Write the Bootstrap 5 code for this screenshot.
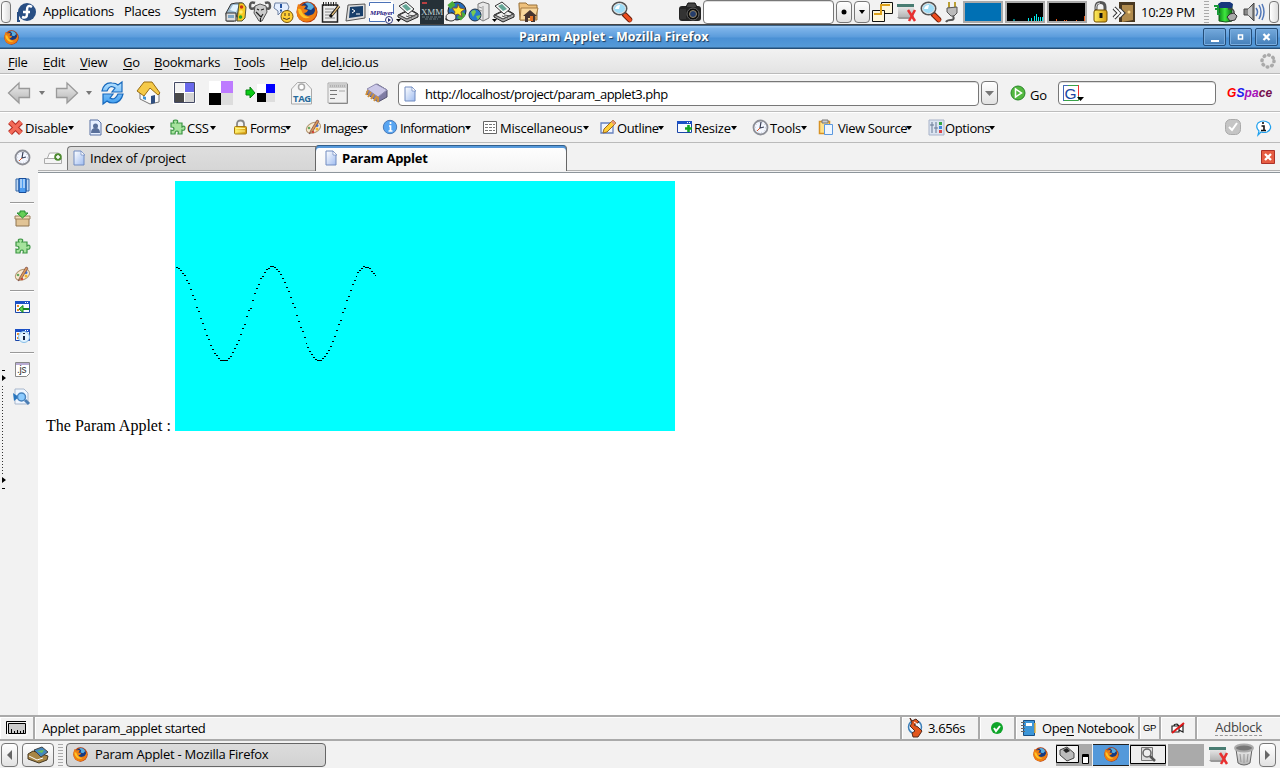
<!DOCTYPE html>
<html lang="en">
<head>
<meta charset="utf-8">
<title>Param Applet - Mozilla Firefox</title>
<link href="https://cdn.jsdelivr.net/npm/bootstrap@5.3.0/dist/css/bootstrap.min.css" rel="stylesheet">
<style>
body{width:1280px;height:768px;overflow:hidden;background:#f2f2f2;color:#000;font:13px/16px "Open Sans","Noto Sans",sans-serif;letter-spacing:-.25px;white-space:nowrap}
svg{display:block;flex:none;overflow:visible}
u{text-underline-offset:2px}
.bar{display:grid;align-items:center;flex:none}
.desk{height:25px;padding-bottom:1px;border-bottom:1px solid #444;grid-template-columns:17px 26px 81px 50px 51px 24px 24px 23px 24px 25px 23px 28px 24px 25px 23px 24px 24px 95px 67px 25px 133px 18px 17px 25px 24px 24px 19px 42px 42px 45px 20px 29px 63px 9px 30px 25px 12px}
.word{margin-top:-2px}
.grab{width:10px;height:22px;margin-left:1px;border:1px solid #777;border-radius:4px;background:linear-gradient(90deg,#fff,#ddd)}
.field{background:#fff;border:1px solid #777;border-radius:4px;box-shadow:inset 0 1px #ddd}
.search-input{width:131px;height:24px}
.address{width:581px;height:25px;letter-spacing:-.49px;padding-top:1px}
.searchbox{width:158px;height:24px}
.pbtn{width:17px;height:24px;border:1px solid #777;border-radius:4px;background:linear-gradient(#fff,#e2e2e2);display:flex;align-items:center;justify-content:center}
.pbtn.mini{width:16px;height:22px}
.pbtn.wide{width:32px}
.graph{width:40px;height:22px;border:2px solid #aaa;background:#000}
.graph.cpu{background:#0070b4}
.grip{width:5px;height:22px;background:repeating-linear-gradient(#aaa 0 1px,transparent 1px 3px)}
.titlebar{height:24px;background:linear-gradient(#3d6285 0 1px,#9cc7f0 1px 2px,#7fb5ea 3px,#5b9cdc 12px,#4a90d4 13px,#559ad8 22px,#254f78 23px);grid-template-columns:519px 686px 26px 26px 23px}
.caption{color:#fff;font-weight:700;font-size:12.5px;letter-spacing:.08px;text-shadow:1px 1px 1px #1b3857}
.wbtn{width:23px;height:18px;border:1px solid #244d78;border-radius:2px;background:linear-gradient(#74a9dc,#447fb9);box-shadow:inset 0 0 0 1px #78acdf;margin:0 0 0 -2px}
.menus{height:25px;padding-top:2px;background:linear-gradient(#f2f2f2,#e3e3e3);border-bottom:1px solid #bbb;padding-left:8px;grid-template-columns:35px 37px 43px 31px 80px 46px 41px 938px 21px}
.tools{height:38px;border-top:1px solid #fff;border-bottom:1px solid #bdbdbd;padding-left:7px;grid-template-columns:33px 14px 33px 13px 36px 37px 36px 36px 45px 37px 37px 34px 583px 29px 48px 169px 53px}
.dev{height:31px;border-top:1px solid #fff;border-bottom:1px solid #bbb;padding-left:7px;grid-template-columns:81px 81px 64px 72px 77px 100px 118px 76px 76px 66px 110px 297px 31px 24px}
.tool{display:flex;align-items:center;gap:1px}
.tool svg:first-child{width:17px;height:17px}
.tool.snug{gap:0;letter-spacing:-.4px}
.tool.tight{letter-spacing:-.66px}
.arrowhead{width:0;height:0;border:3px solid transparent;border-top:4px solid #000;border-bottom:0;margin-left:-1px;flex:none}
.arrowhead.dim{border-width:3px 3px 0;border-top:4px solid #777;margin:0 0 0 -1px}
.gspace{font:italic bold 12px "Liberation Sans",sans-serif;letter-spacing:.1px}
.sidecol{width:38px;padding-left:10px;position:relative;flex:none}
.sidegrid{display:grid;grid-template-rows:28px 29px 5px 27px 29px 27px 5px 28px 29px 5px 28px 28px;align-items:center;width:24px;justify-items:center}
.sideline{width:24px;height:2px;border-top:1px solid #999;border-bottom:1px solid #fff}
.splitter{position:absolute;left:0;top:227px}
.tabs{height:30px;border-bottom:1px solid #8d959b;position:relative;padding-left:6px;display:flex;align-items:flex-end}
.tabs::after{content:"";position:absolute;left:0;right:0;bottom:1px;height:1px;background:#b2b2b2}
.tb{display:flex;align-items:center;position:relative;z-index:1}
.tb1{width:249px;height:24px;margin:0 0 2px 5px;background:linear-gradient(#dedede,#d6d6d6);border:1px solid #777;border-right:0;border-bottom:0;border-radius:4px 0 0 0;padding:0 0 1px 4px}
.tb2{width:252px;height:26px;margin-left:-1px;margin-bottom:1px;background:linear-gradient(#fff,#f4f4f4);border:solid #666;border-width:0 1px;border-radius:4px 4px 0 0;padding:0 0 1px 8px;font-weight:700;box-shadow:inset 0 1px #315f8c,inset 0 3px #5799da}
.newtab{margin-bottom:7px}
.closetab{margin:0 5px 8px auto}
.page{background:#fff;padding:8px;font:16px/18px "Liberation Serif",serif;letter-spacing:0;flex:1}
.page svg{display:inline-block;vertical-align:baseline}
.status{height:26px;border-top:2px solid #aaa;border-bottom:2px solid #aaa;letter-spacing:-.36px;grid-template-columns:35px 867px 78px 36px 124px 21px 36px 83px}
.status>div{height:22px;border-right:2px solid #aaa;display:flex;align-items:center;box-shadow:inset 1px 1px #fff;padding-bottom:1px}
.status>div:last-child{border:0}
.status .message{padding-left:7px}
.status .gp{font:9.5px "Liberation Sans",sans-serif}
.adblock{border-bottom:1px dashed #999;line-height:15px;color:#444;letter-spacing:-.25px}
.bottom{height:27px;padding-left:1px;grid-template-columns:21px 36px 8px 967px 23px 37px 37px 38px 40px 26px 25px 21px}
.task{width:260px;height:24px;border:1px solid #666;border-radius:4px;background:linear-gradient(#dcdcdc,#d2d2d2);gap:7px;padding:0 0 1px 6px}
.cell{width:36px;height:22px;background:#aaa;display:flex}
.cell.on{background:#5499da;border:solid #222;border-width:1px 0}
</style>
</head>
<body class="d-flex flex-column m-0">
<svg width="0" height="0" class="position-absolute" aria-hidden="true">
<defs>
<linearGradient id="gb" x2="1" y2="1"><stop stop-color="#fff"/><stop offset="1" stop-color="#9fbcf0"/></linearGradient>
<linearGradient id="gg" y2="1" x2="0"><stop stop-color="#eee"/><stop offset="1" stop-color="#b5b5b5"/></linearGradient>
<linearGradient id="gr" y2="1" x2="0"><stop stop-color="#b9e3ff"/><stop offset="1" stop-color="#3c9cf0"/></linearGradient>
<linearGradient id="gold"><stop stop-color="#ffef60"/><stop offset="1" stop-color="#d49a10"/></linearGradient>
<linearGradient id="bat"><stop stop-color="#0c8a14"/><stop offset=".45" stop-color="#3fe83f"/><stop offset="1" stop-color="#0a6d12"/></linearGradient>
<radialGradient id="ffo"><stop offset=".4" stop-color="#f8b020"/><stop offset=".8" stop-color="#e66a0c"/><stop offset="1" stop-color="#a52a06"/></radialGradient>
<symbol id="ff" viewBox="0 0 22 22"><circle cx="11" cy="11" r="10.5" fill="url(#ffo)"/><circle cx="11.500" cy="9" r="7.500" fill="#173a80"/><path d="M9 2q6-2 9 4l-3 3-4-1 1-3z" fill="#5aaede"/><path d="M2 3l3 2q3-1 5 0l-2 3 4 1q-1 3-4 3 2 4 7 2 4-1 5-7 2 8-4 12-7 4-13-1Q-1 13 2 3z" fill="#ee7e12"/><path d="M2 8q3-1 4 3 2 5 8 5-5 3-9-1-3-3-3-7z" fill="#ffc426"/></symbol>
<symbol id="mag" viewBox="0 0 22 22"><path d="M13.500 13.500l5 5" stroke="#6b1c08" stroke-width="5.500" stroke-linecap="round"/><path d="M14 14l5 5" stroke="#ee4d1e" stroke-width="3.500" stroke-linecap="round"/><ellipse cx="8.500" cy="7.500" rx="7" ry="6" fill="#9ddcf6" stroke="#555" stroke-width="2"/><ellipse cx="8.500" cy="7.500" rx="6" ry="5" fill="none" stroke="#eee"/><path d="M4 8q1-4 5-4l-1 4z" fill="#fff"/></symbol>
<symbol id="scan" viewBox="0 0 23 22"><path d="M2 14l12-6 8 5v3l-11 5-9-5z" fill="#aaa" stroke="#222"/><path d="M3 14l11-5 7 4-10 5z" fill="#eee" stroke="#333"/><path d="M3 5l7-4 8 7-6 5z" fill="#f8f8f8" stroke="#333"/><path d="M6 5l4-2 5 5-4 2z" fill="#65a695"/><path d="M12 14l7 1M10 15l6 2" stroke="#555"/><path d="M0 18h5l-2.500 3z"/></symbol>
<symbol id="netx" viewBox="0 0 22 20"><path d="M2 3h16v12H2z" fill="url(#gg)"/><path d="M1 2h17v3H1z" fill="#487c72"/><path d="M1 15h14l-2 2H3z" fill="#999"/><path d="M12 8l7 11M19 8l-6 11" stroke="#e83030" stroke-width="2.500"/></symbol>
<symbol id="doc" viewBox="0 0 14 16"><path d="M2 1h7l3 4v10H2z" fill="url(#gb)" stroke="#718bc0"/><path d="M9 1v4h4z" fill="#fff" stroke="#718bc0" stroke-width=".7"/></symbol>
<symbol id="clock" viewBox="0 0 17 17"><circle cx="8.500" cy="8.500" r="7" fill="#f5f8ff" stroke="#8c8e96" stroke-width="1.800"/><circle cx="8.500" cy="8.500" r="5" fill="none" stroke="#c2c9dc" stroke-dasharray="1 2"/><path d="M9 3L8 9l4-1" fill="none" stroke="#3a4058" stroke-width="1.200"/><path d="M8 9l-3 3" stroke="#d52"/></symbol>
<symbol id="puz" viewBox="0 0 17 17"><path d="M2 4h3Q3 1 6.500 1T8 4h5v4q3-2 3 1t-3 2v4H9q1-3-1-3t-2 3H2v-4q3 1 3-1T2 8z" fill="#a6e39d" stroke="#3c9544" stroke-width="1.200"/></symbol>
<symbol id="pal" viewBox="0 0 17 17"><ellipse cx="8.500" cy="9" rx="7.500" ry="5" transform="rotate(-25 8 9)" fill="#f9ead0" stroke="#b39773"/><circle cx="4" cy="9" r="1.300" fill="#67a75f"/><circle cx="12" cy="6.500" r="1.500" fill="#3d75dd"/><circle cx="12" cy="10" r="1.500" fill="#f2b42c"/><circle cx="8" cy="13" r="1.200" fill="#d43"/><path d="M12 1L6 11l-2 4 4-3 6-10z" fill="#da9a58" stroke="#744" stroke-width=".7"/></symbol>
<symbol id="lock" viewBox="0 0 17 17"><path d="M4 8V5q0-3.500 3.500-3.500T11 5v3" fill="none" stroke="#888" stroke-width="1.800"/><rect x="1.500" y="7.500" width="12" height="7.500" rx="1" fill="url(#gold)" stroke="#a67810"/><path d="M3 9.500h9M3 12h9" stroke="#fff48d"/></symbol>
<symbol id="info" viewBox="0 0 17 17"><circle cx="8" cy="8" r="6.700" fill="#58a5f2" stroke="#4c7bb7"/><path d="M8.500 3v2M7 7h1.500v5M6.500 12h4" stroke="#fff" stroke-width="1.700" fill="none"/></symbol>
<symbol id="win" viewBox="0 0 17 17"><path d="M1.500 2.500h14v11h-14z" fill="#f7fbff" stroke="#1a45a8"/><path d="M1 2h15v3H1z" fill="#1b50c5"/><path d="M11 3.500h1M13 3.500h1" stroke="#fff"/></symbol>
<symbol id="arw" viewBox="0 0 26 24"><path d="M1.500 12L12 2v5.500h10.500v9H12V22z" fill="url(#gg)" stroke="#999" stroke-width="1.300"/></symbol>
</defs></svg>

<header class="bar desk">
<span class="grab"></span>
<svg width="20" height="20"><circle cx="10" cy="10" r="9" fill="#294f84"/><path d="M3 19H1V10" fill="none" stroke="#294f84" stroke-width="2"/><path d="M15 5q-5-3-5 3v4q0 5-5 3M6 10h7" fill="none" stroke="#fff" stroke-width="2.500"/></svg>
<span class="word">Applications</span><span class="word">Places</span><span class="word">System</span>
<svg width="22" height="22"><path d="M1 12l5-9 5-1h6l-5 12-3 6H2z" fill="#9bbad0" stroke="#333"/><path d="M5 9l3-5h6l-3 7z" fill="#e2f4ff"/><path d="M1 12h10v8H1z" fill="#ddd" stroke="#333"/><path d="M3 14h6v3H3z" fill="#7fa6c4"/><path d="M14 2h4l3 4-1 11-3 3h-5z" fill="#f7cb24" stroke="#553"/><circle cx="16.500" cy="6" r="1.800" fill="#cd3311"/><circle cx="16" cy="11" r="1.800" fill="#ffef72"/><circle cx="15.500" cy="16" r="1.800" fill="#28a628"/></svg>
<svg width="22" height="22"><path d="M7 6Q1 10 1 5t5-3M15 6q6 4 6-1t-5-3" fill="none" stroke="#555" stroke-width="2.500"/><path d="M6 5l5-2 6 2 1 6-5 9h-3L5 12z" fill="#ccc" stroke="#555"/><path d="M8 8l2 1M15 8l-3 1M9 13l3 3 2-3M11.500 17v4M7 11l3 3" stroke="#222" stroke-width="1.200" fill="none"/></svg>
<svg width="22" height="22"><path d="M2 2h12l2 4-2 5H8l-3 3v-4L1 7z" fill="#e5efff" stroke="#6c80a2"/><path d="M8 3v4M8 8.500v2" stroke="#2453a0" stroke-width="2"/><circle cx="14" cy="15.500" r="6" fill="#ffcf35" stroke="#70500b"/><path d="M12 12v3M16 12v3M10 17q4 3 7 0" stroke="#432" fill="none"/></svg>
<svg width="22" height="22"><use href="#ff"/></svg>
<svg width="22" height="22"><path d="M2.500 4h15v17h-15z" fill="#eee" stroke="#222" stroke-width="1.500"/><path d="M3 3h15" stroke="#222" stroke-width="4" stroke-dasharray="1 1.500"/><path d="M5 8h9M5 11h8M5 14h7M5 17h10" stroke="#888"/><path d="M19 5L10 16" stroke="#111" stroke-width="3"/><path d="M19 5l-7 9" stroke="#dcb777" stroke-width="1.300"/></svg>
<svg width="22" height="22"><path d="M3 4l17-1v14L1 20z" fill="#ddd" stroke="#555"/><path d="M5 6l13-1v10L4 17z" fill="#183f6b"/><path d="M7 8l3 2-3 2M11 13h4" fill="none" stroke="#fff"/></svg>
<svg width="27" height="23"><path d="M1 0h24v21H1z" fill="#fff"/><path d="M1.500 5V1.500H23M1.500 17v3.500H17M25.500 3v10" fill="none" stroke="#4c72b7"/><text x="2" y="14" font-size="7" font-style="italic" font-weight="700" font-family="Liberation Serif,serif" fill="#292183" textLength="23">MPlayer</text><circle cx="21" cy="19" r="3.500" fill="#fff" stroke="#293175"/><path d="M20 17l3 2-3 2z" fill="#293175"/></svg>
<svg width="23" height="22"><use href="#scan"/></svg>
<svg width="24" height="24"><path d="M0 0h24v24H0z" fill="#263138"/><path d="M2 3h5" stroke="#b94042" stroke-width="2"/><text x="1" y="15" font-size="9" font-family="Liberation Serif,serif" fill="#c5d3d6" textLength="22">XMM</text><path d="M2 17h20M5 19h13" stroke="#687a7e" stroke-dasharray="3 1"/></svg>
<svg width="22" height="22"><circle cx="12" cy="10" r="9" fill="#246bba" stroke="#222"/><path d="M4 6l5-4M14 18l5-6" stroke="#4bae3b" stroke-width="5"/><path d="M13 3l2 4 5 1-4 3 1 5-4-3-5 2 2-4-3-4h5z" fill="#ffe42a" stroke="#754"/><path d="M8 12L1 19" stroke="#222" stroke-width="3"/><ellipse cx="6" cy="16" rx="5" ry="4" fill="#eee" stroke="#333"/></svg>
<svg width="22" height="22"><path d="M10 3l5-2 6 2v14l-6 3-5-3z" fill="#e8e8e8" stroke="#777"/><path d="M15 5v14M11 6l3 1M11 9l3 1" stroke="#999"/><circle cx="7" cy="14" r="6" fill="#2679ce" stroke="#234"/><path d="M3 11q4-4 5 0l-3 5zM8 15l5-1-3 5z" fill="#79c950"/></svg>
<svg width="23" height="22"><use href="#scan"/></svg>
<svg width="24" height="22"><path d="M3 4V2h7l2 2h9v15H4z" fill="#efc17c" stroke="#987038"/><path d="M5 7h17l-3 12H4z" fill="#f8d79c" stroke="#a77c44"/><path d="M7 15l7-6 7 6h-2v6h-4v-4h-3v4H9v-6z" fill="#47352f"/><path d="M14 15h3v5h-3z" fill="#e77325"/></svg>
<svg width="22" height="22"><use href="#mag"/></svg>
<svg width="24" height="22"><rect x="1" y="5" width="22" height="15" rx="3" fill="#242424"/><path d="M8 6l2-4h7l2 4" fill="#444" stroke="#111"/><path d="M2 8h6v10H2z" fill="#333"/><circle cx="15" cy="13" r="6" fill="#0c0c0c" stroke="#666"/><circle cx="15" cy="13" r="3.500" fill="#253d6b" stroke="#978765"/></svg>
<span class="field search-input"></span>
<span class="pbtn mini"><svg width="6" height="6"><circle cx="3" cy="3" r="2.500"/></svg></span>
<span class="pbtn mini"><i class="arrowhead m-0"></i></span>
<svg width="23" height="22"><path d="M10.500 1.500h11v11h-11z" fill="#fff7da" stroke="#111"/><path d="M1.500 9.500h12v11h-12z" fill="#fff7da" stroke="#111"/><path d="M3 13h7V4h9" stroke="#dda11b" stroke-width="2" fill="none"/></svg>
<svg width="22" height="20"><use href="#netx"/></svg>
<svg width="22" height="22"><use href="#mag"/></svg>
<svg width="16" height="22"><path d="M5 1v6M11 1v6" stroke="#bba034" stroke-width="2"/><path d="M3 7l10-1v6l-3 3H7l-4-4z" fill="#bbb" stroke="#555"/><path d="M9 15q2 4-2 4t-5 2" fill="none" stroke="#555" stroke-width="2"/></svg>
<span class="graph cpu"></span>
<span class="graph"><svg width="36" height="18" stroke="#0ee"><path d="M7 16v2M21.500 15v3M24.500 15v3M27.500 13v5M29.500 11v7M31.500 14v4M33.500 14v4M35.500 14v4"/></svg></span>
<span class="graph"><svg width="36" height="18" stroke="#f05a16"><path d="M7.500 16v2M15.500 17v1M17.500 17v1M27.500 17v1M35.500 13v5"/></svg></span>
<svg width="18" height="22"><path d="M4 10V6q0-4.500 4.500-4.500T13 6v3" fill="none" stroke="#555" stroke-width="3"/><path d="M4 8V6q0-4 4-4" fill="none" stroke="#ccc"/><rect x="2" y="9" width="13" height="12" rx="2" fill="url(#gold)" stroke="#714e00"/><path d="M9 12v5" stroke="#111" stroke-width="3"/></svg>
<svg width="24" height="22"><path d="M7 1h16v20H7z" fill="#493821"/><path d="M10 4h11v15l-11 2z" fill="#b18b4d"/><circle cx="17" cy="11" r="1.500" fill="#ffd888"/><path d="M2 7l5 5-5 5M7 8l4 4-4 4" stroke="#333" stroke-width="4" fill="none"/><path d="M2 7l5 5-5 5M7 8l4 4-4 4" stroke="#fff" stroke-width="2" fill="none"/></svg>
<span>10:29 PM</span><span class="grip"></span>
<svg width="26" height="22"><path d="M6 3h13v17l-6 1-7-1z" fill="url(#bat)" stroke="#15581d"/><path d="M5 3l3-2h9l3 2-1 4H6z" fill="#16377c"/><path d="M1 5h4v8h3M5 8H2" fill="none" stroke="#189a38" stroke-width="2"/><path d="M15 8q7-1 6 5" fill="none" stroke="#444" stroke-width="1.500"/><path d="M17 13l4-1 3 3-2 4-5 1-3-4z" fill="#aaa" stroke="#333"/></svg>
<svg width="23" height="22"><path d="M1 8h4l6-6v18l-6-6H1z" fill="#888" stroke="#444"/><path d="M5 8l4-3v12l-4-3z" fill="#ccc"/><path d="M13 7q3 4 0 8M16 4q4 7 0 14M19 3q4 8 0 16" fill="none" stroke="#5378b8" stroke-width="1.500"/></svg>
<span class="grab"></span>
</header>

<div class="bar titlebar"><svg width="15" height="15" class="ms-1"><use href="#ff"/></svg><span class="caption">Param Applet - Mozilla Firefox</span>
<span class="wbtn"><svg width="21" height="16"><path d="M7 12h8" stroke="#fff" stroke-width="2"/></svg></span><span class="wbtn"><svg width="21" height="16"><path d="M8.500 6h4v4h-4z" stroke="#fff" stroke-width="1.500" fill="none"/></svg></span><span class="wbtn"><svg width="21" height="16"><path d="M7.500 5l6 6M13.500 5l-6 6" stroke="#fff" stroke-width="2.300"/></svg></span></div>

<nav class="bar menus"><span><u>F</u>ile</span><span><u>E</u>dit</span><span><u>V</u>iew</span><span><u>G</u>o</span><span><u>B</u>ookmarks</span><span><u>T</u>ools</span><span><u>H</u>elp</span><span>del<u>.</u>icio.us</span><svg width="18" height="18"><circle cx="9" cy="8" r="6" fill="none" stroke="#aaa" stroke-width="3.500" stroke-linecap="round" stroke-dasharray=".6 4.112"/></svg></nav>

<div class="bar tools">
<svg width="26" height="24"><use href="#arw"/></svg><i class="arrowhead dim"></i>
<svg width="26" height="24"><use href="#arw" transform="translate(25 0) scale(-1 1)"/></svg><i class="arrowhead dim"></i>
<svg width="25" height="24"><path d="M2 10Q4 1 12 2q4 0 6 2l4-3v10H12l3-4q-5-4-8 3zM23 13q-2 9-10 9-4 0-6-2l-4 3V13h10l-3 4q5 3 8-4z" fill="url(#gr)" stroke="#1769bd" stroke-width="1.200"/></svg>
<svg width="26" height="24"><path d="M4 11l11-6 8 8v8l-9 2-10-5z" fill="#fafafa" stroke="#777"/><path d="M1 10L8 1l8 0 8 11-2 2-8-7-6 8z" fill="#f5ca48" stroke="#966b13"/><path d="M15 15l4-1v8l-4 1z" fill="#315080"/><path d="M7 15l3 1v3l-3-1z" fill="#3d93d4"/></svg>
<svg width="24" height="24"><path d="M0 0h23v23H0z" fill="#fff"/><path d="M2 2h9v9H2z" fill="#f2f2f2"/><path d="M12 2h9v9h-9z" fill="#6969eb"/><path d="M2 12h9v9H2z" fill="#4a4a4a"/><path d="M12 12h9v9h-9z" fill="#d4d4d4"/><path d="M1.500 1.500h20v20h-20z" fill="none" stroke="#444a65"/></svg>
<svg width="24" height="24" shape-rendering="crispEdges"><path d="M0 0h12v12H0z" fill="#fff"/><path d="M12 0h12v12H12z" fill="#bd7bff"/><path d="M0 12h12v12H0z"/><path d="M12 12h12v12H12z" fill="#ddd"/></svg>
<svg width="32" height="24"><path d="M12 3h9v9h-9z" fill="#fff"/><path d="M21 3h9v9h-9z" fill="#00f"/><path d="M12 12h9v9h-9z"/><path d="M21 12h9v9h-9z" fill="#ddd"/><path d="M1 9h4V6l5 6-5 5v-3H1z" fill="#0bcb16" stroke="#078411"/></svg>
<svg width="24" height="24"><path d="M1.500 8l6-6.500h8l6 6.500v15h-20z" fill="#f5f5f5" stroke="#aaa"/><circle cx="11.500" cy="6" r="3" fill="#fff" stroke="#aaa" stroke-width="1.500"/><text x="3" y="21" font-size="9.500" font-weight="700" fill="#286b9d" textLength="18">TAG</text></svg>
<svg width="23" height="24"><path d="M1 2h19v20H1z" fill="#f0f0f0" stroke="#aaa"/><path d="M20.500 3v19.500H2" stroke="#888" fill="none"/><path d="M2 3h17v4H2z" fill="#ccc"/><path d="M3 5h15" stroke="#999" stroke-dasharray="1 1"/><path d="M3 9.500h7M3 13.500h7M3 17.500h5" stroke="#777"/><path d="M12 9h6v2h-6z" fill="#ccc"/></svg>
<svg width="25" height="24"><path d="M3 10l10-7 10 6v7l-9 5-11-8z" fill="#7f7ca4" stroke="#55536f"/><path d="M3 8l9-5 11 6-9 7z" fill="#cbc8e8" stroke="#908db1"/><path d="M14 16v5M4 9l-2 5M7 11l-3 5M10 13l-3 5M13 15l-3 5" stroke="#d49237" stroke-width="1.800"/></svg>
<div class="field address d-flex align-items-center"><svg class="ms-1 me-2" width="14" height="16"><use href="#doc"/></svg><span>http://localhost/project/param_applet3.php</span></div>
<span class="pbtn"><svg width="9" height="5"><path d="M0 0h9L4.500 5z" fill="#777"/></svg></span>
<span class="d-flex align-items-center gap-1"><svg width="16" height="16"><circle cx="8" cy="8" r="7" fill="#53b83f" stroke="#288629"/><path d="M5.500 4v8l6-4z" fill="#54b742" stroke="#fff" stroke-width="1.500"/></svg><span class="pt-1">Go</span></span>
<div class="field searchbox d-flex align-items-center"><svg width="22" height="18" class="ms-1"><path d="M.5 1.500h15v15H.5z" fill="#fff" stroke="#3aa349"/><path d="M.5 17V1.500H5" fill="none" stroke="#46b"/><path d="M15.500 1v11" stroke="#e33"/><text x="1.500" y="14.500" font-family="Liberation Sans,sans-serif" font-size="15.500" fill="#1b46a3">G</text><path d="M14 13h7l-3.500 4z"/></svg></div>
<span class="gspace"><span style="color:#f00">G</span><span style="color:#2020f0">S</span><span style="color:#a612ba">pa</span><span style="color:#75104d">ce</span></span>
</div>

<div class="bar dev">
<span class="tool"><svg viewBox="0 0 17 17"><path d="M3 3l11 11M14 3L3 14" stroke="#b42d25" stroke-width="5.500"/><path d="M3 3l11 11M14 3L3 14" stroke="#f36a58" stroke-width="3.500"/></svg>Disable<i class="arrowhead"></i></span>
<span class="tool snug"><svg viewBox="1 0 17 17"><path d="M3 1h8l3 3v12H3z" fill="#e6efff" stroke="#5870a3"/><circle cx="8.500" cy="7" r="2.500" fill="#596f9a"/><path d="M4 14q0-5 4.500-5t4.500 5z" fill="#596f9a"/></svg>Cookies<i class="arrowhead"></i></span>
<span class="tool"><svg><use href="#puz"/></svg>CSS<i class="arrowhead ms-0"></i></span>
<span class="tool snug"><svg><use href="#lock"/></svg>Forms<i class="arrowhead"></i></span>
<span class="tool tight"><svg><use href="#pal"/></svg>Images<i class="arrowhead"></i></span>
<span class="tool tight"><svg><use href="#info"/></svg>Information<i class="arrowhead"></i></span>
<span class="tool"><svg viewBox="0 0 17 17"><path d="M1.500 2.500h13v12h-13z" fill="#fff" stroke="#666"/><path d="M3 5.500h10M3 8.500h10M3 11.500h10" stroke="#777" stroke-dasharray="3 1"/></svg>Miscellaneous<i class="arrowhead"></i></span>
<span class="tool snug"><svg viewBox="0 0 17 17"><path d="M1 4h12v10H1z" fill="#f0f5ff" stroke="#6681bf" stroke-width="1.300"/><path d="M13 1l3 3-9 9-4 1 1-4z" fill="#ffcf38" stroke="#9b6820"/><path d="M13 1l3 3-2 2-3-3z" fill="#e6977c"/></svg>Outline<i class="arrowhead"></i></span>
<span class="tool"><svg viewBox="0 0 17 17"><use href="#win"/><path d="M9 9.500h7M12.500 6v7" stroke="#13a523" stroke-width="2.600"/></svg>Resize<i class="arrowhead"></i></span>
<span class="tool"><svg><use href="#clock"/></svg>Tools<i class="arrowhead"></i></span>
<span class="tool snug"><svg viewBox="0 0 17 17"><path d="M1.500 2.500h10v12h-10z" fill="#ffe088" stroke="#d79224" stroke-width="1.500"/><path d="M4 1h6v3H4z" fill="#ccc" stroke="#777"/><path d="M6.500 5.500h8v10h-8z" fill="#eef6ff" stroke="#5b98df"/></svg><span style="padding-left:3px">View Source</span><i class="arrowhead"></i></span>
<span class="tool snug"><svg viewBox="0 0 17 17"><path d="M1 1h15v15H1z" fill="#dce4f1" stroke="#a8b3c9"/><path d="M4 3v11M8 3v11M2 6h4M6 9h4" stroke="#677995"/><path d="M11 3h3v3h-3z" fill="#34a644"/><path d="M11 7h3v3h-3z" fill="#4388dd"/><path d="M11 11h3v3h-3z" fill="#dc4344"/></svg>Options<i class="arrowhead"></i></span>
<svg width="17" height="17"><rect x=".5" y=".5" width="15" height="15" rx="5" fill="#c5c5c5" stroke="#aaa"/><path d="M4 8l3 3 5-7" fill="none" stroke="#fff" stroke-width="2"/></svg>
<svg width="16" height="16"><path d="M3 11Q-1 7 2 3q5-4 11 0 4 6-2 9-3 1-6 0l-3 3z" fill="#fff" stroke="#21a1ee" stroke-width="1.200"/><path d="M7 2v2M5.500 6H8v4M5 10.500h5" fill="none" stroke="#111" stroke-width="1.600"/></svg>
</div>

<main class="d-flex flex-grow-1" style="min-height:0">
<aside class="sidecol"><div class="sidegrid">
<svg width="17" height="17"><use href="#clock"/></svg>
<svg width="17" height="17"><path d="M2 2h3v12H2zM12 2h3v12h-3z" fill="#bdd8f5" stroke="#3469a9"/><path d="M5 1.500h7v14H5z" fill="#4b9bf0" stroke="#174d9b"/><path d="M7 2v9M10 2v9" stroke="#fff"/></svg>
<span class="sideline"></span>
<svg width="17" height="17"><path d="M2 8h13v8H2z" fill="#e1c496" stroke="#8e7450"/><path d="M1 6h15v3H1z" fill="#f1dcb8" stroke="#9c805c"/><path d="M6 1h5v2h3l-5.500 5L3 3h3z" fill="#66cf57" stroke="#278d32"/></svg>
<svg width="17" height="17"><use href="#puz"/></svg>
<svg width="17" height="17"><use href="#pal"/></svg>
<span class="sideline"></span>
<svg width="17" height="17"><use href="#win"/><path d="M3 7h2M3 11h2" stroke="#e78b2a" stroke-width="2"/><path d="M15 9.500H9V6.500L5 10l4 3.500v-3h6z" fill="#65d350" stroke="#168422"/></svg>
<svg width="17" height="17"><use href="#win"/><path d="M3 7h2M3 11h2" stroke="#e78b2a" stroke-width="2"/><circle cx="10" cy="10" r="5.500" fill="#e1f2ff" stroke="#88bfe8"/><path d="M10 6v1M10 9v4" stroke="#124" stroke-width="2"/></svg>
<span class="sideline"></span>
<svg width="17" height="17"><path d="M1.500 1.500h14v11l-3 3h-11z" fill="#fff" stroke="#888"/><path d="M2 2h13v2H2z" fill="#b8abd3"/><text x="3" y="12" font-family="Liberation Sans,sans-serif" font-size="10" fill="#333">.js</text></svg>
<svg width="18" height="18"><path d="M2 1h9l4 4v11H2z" fill="#eff6ff" stroke="#a8b7cc"/><path d="M0 5l6 4-5 4z" fill="#2876bf"/><circle cx="8.500" cy="9" r="4" fill="#8bcbff" stroke="#4883bd" stroke-width="1.500"/><path d="M12 12l4 4" stroke="#4c7eb4" stroke-width="3"/></svg>
</div>
<svg class="splitter" width="8" height="120"><path d="M2 .500h3M2 118.500h3" stroke="#000"/><path d="M2 5l4 3-4 3zM2 107l4 3-4 3z"/><path d="M2.500 16v88" stroke="#333" stroke-dasharray="1 2"/></svg>
</aside>
<section class="d-flex flex-column flex-grow-1">
<div class="tabs">
<svg class="newtab" width="18" height="16"><path d="M3.500 9l2-5h9l2 5" fill="#fff" stroke="#aaa"/><path d="M.5 9.500h17v5H.5z" fill="#f4f4f4" stroke="#aaa"/><circle cx="14" cy="8" r="3.800" fill="#4e8b31"/><path d="M12 8h4M14 6v4" stroke="#fff" stroke-width="1.500"/></svg>
<div class="tb tb1"><svg width="14" height="16" class="me-1"><use href="#doc"/></svg>Index of /project</div>
<div class="tb tb2"><svg width="14" height="16" class="me-1"><use href="#doc"/></svg>Param Applet</div>
<svg class="closetab" width="14" height="14"><path d="M.5.500h13v13H.5z" fill="#e65c42" stroke="#ad3128"/><path d="M4 4l6 6M10 4l-6 6" stroke="#fff" stroke-width="2.300"/></svg>
</div>
<div class="page">The Param Applet : <svg width="500" height="250" shape-rendering="crispEdges"><rect width="500" height="250" fill="#0ff"/><path id="wave"/></svg></div>
</section>
</main>

<footer class="bar status">
<div style="padding-left:6px"><svg width="22" height="14"><path d="M.5 13V.500H20" fill="none" stroke="#000"/><path d="M2.500 2.500h17v10h-17z" fill="#ccc" stroke="#000"/><path d="M5.500 12V8M8.500 12v-2M11.500 12V9M14.500 12v-2M17.500 12V9" stroke="#000"/><path d="M21 1v13H1" fill="none" stroke="#fff"/></svg></div>
<div class="message">Applet param_applet started</div>
<div><svg width="22" height="22" class="ms-1"><circle cx="9" cy="10" r="6.500" fill="#eef6ff" stroke="#3c7fb8" stroke-width="1.500"/><path d="M4 1l2 3 4-2 3 3-5 3 4 2 4 4-4 6H7l-1-4 3-2-5-5 2-3z" fill="#e2561d" stroke="#54291b"/><path d="M8 5l3 2" stroke="#fff"/></svg><span class="ps-0">3.656s</span></div>
<div class="justify-content-center"><svg width="14" height="14"><circle cx="7" cy="7" r="6" fill="#0fa52a"/><path d="M4 7l2 3 4-5" fill="none" stroke="#fff" stroke-width="2"/></svg></div>
<div><svg width="17" height="18" class="ms-1 me-1"><path d="M3.500 1.500h11v15h-11z" fill="#3c96d8" stroke="#174f85"/><path d="M6 4h6v3H6z" fill="#fff"/><path d="M1 3.500h4M1 6.500h4M1 9.500h4M1 12.500h4" stroke="#666"/><path d="M15 4v10" stroke="#ebba43" stroke-width="1.500"/></svg><span style="padding-left:1px">Ope<u>n</u> Notebook</span></div>
<div class="gp justify-content-center">GP</div>
<div class="justify-content-center"><svg width="14" height="14"><path d="M1 5h7v6H1zM8 7l4-3v7l-4-2M3 5q0-2 3-2l2 2" fill="#fff" stroke="#222" stroke-width="1.200"/><path d="M1 12L13 2" stroke="#e21818" stroke-width="2"/></svg></div>
<div class="justify-content-center"><span class="adblock">Adblock</span></div>
</footer>

<footer class="bar bottom">
<span class="pbtn"><svg width="5" height="10"><path d="M5 0v10L0 5z" fill="#666"/></svg></span>
<span class="pbtn wide"><svg width="22" height="18"><path d="M1 8l5-3 15 5-1 4-8 3L1 13z" fill="#a88645" stroke="#443721"/><path d="M7 4l8-3 6 5-7 5z" fill="#4388bb" stroke="#444"/><path d="M10 5l5 2 2-3z" fill="#66bf5b"/><path d="M2 10l8 4 6-2" fill="none" stroke="#fff"/></svg></span>
<span class="grip"></span>
<div class="task d-flex align-items-center"><svg width="15" height="15"><use href="#ff"/></svg>Param Applet - Mozilla Firefox</div>
<svg width="15" height="15"><use href="#ff"/></svg>
<span class="cell"><svg width="36" height="22"><path d="M.5 1.500h22v17H.5z" fill="#f2f2f2" stroke="#000"/><path d="M4 6l7-3 7 6v5l-7 3-7-6z" fill="#bbb" stroke="#444"/><path d="M7 6l4-2 3 3-4 2z" fill="#222"/><path d="M26.500 10.500h6v9h-6z" fill="#fff" stroke="#000"/><path d="M26 12h7" stroke="#000" stroke-width="2"/></svg></span>
<span class="cell on"><svg width="15" height="15" class="m-auto"><use href="#ff"/></svg></span>
<span class="cell"><svg width="36" height="22"><path d="M.5 1.500h35v18H.5z" fill="#eee" stroke="#000"/><path d="M11.500 3.500h11v13h-11z" fill="#ddd" stroke="#777"/><circle cx="17" cy="9" r="4" fill="#eee" stroke="#666" stroke-width="1.500"/><path d="M20 12l5 5" stroke="#555" stroke-width="2.500"/></svg></span>
<span class="cell"></span>
<svg width="22" height="20"><use href="#netx"/></svg>
<svg width="20" height="23"><path d="M2 6l2 14q6 4 12 0l2-14z" fill="url(#gg)" stroke="#666"/><ellipse cx="10" cy="5" rx="9" ry="3.500" fill="#777" stroke="#aaa" stroke-width="2"/><path d="M6 11l1 8M10 11v9M14 11l-1 8" stroke="#999"/></svg>
<span class="pbtn"><svg width="5" height="10"><path d="M0 0v10l5-5z" fill="#666"/></svg></span>
</footer>
<script>
// Plotted rows of the applet, left to right, starting one pixel in; entries are [row, width], plain numbers are 2px dashes.
const rows=[86,87,89,92,94,99,102,108,114,118,126,130,137,142,148,154,158,164,168,172,174,177,[179,8],177,175,171,167,163,159,153,147,143,135,129,127,119,112,107,103,97,95,91,88,87,[85,4],86,88,90,93,97,101,106,110,116,122,126,134,140,146,150,156,[162,1],166,170,173,176,178,[179,5],177,175,172,169,165,160,155,149,143,139,131,127,119,115,109,103,99,[95,1],91,89,87,85,[86,4],87,90,92,[94,1]];
let x=1,d="";
for(const r of rows){const [y,w]=Array.isArray(r)?r:[r,2];d+=`M${x} ${y}h${w}v1h-${w}z`;x+=w}
document.getElementById("wave").setAttribute("d",d);
</script>
<script src="https://cdn.jsdelivr.net/npm/bootstrap@5.3.0/dist/js/bootstrap.bundle.min.js"></script>
</body>
</html>
